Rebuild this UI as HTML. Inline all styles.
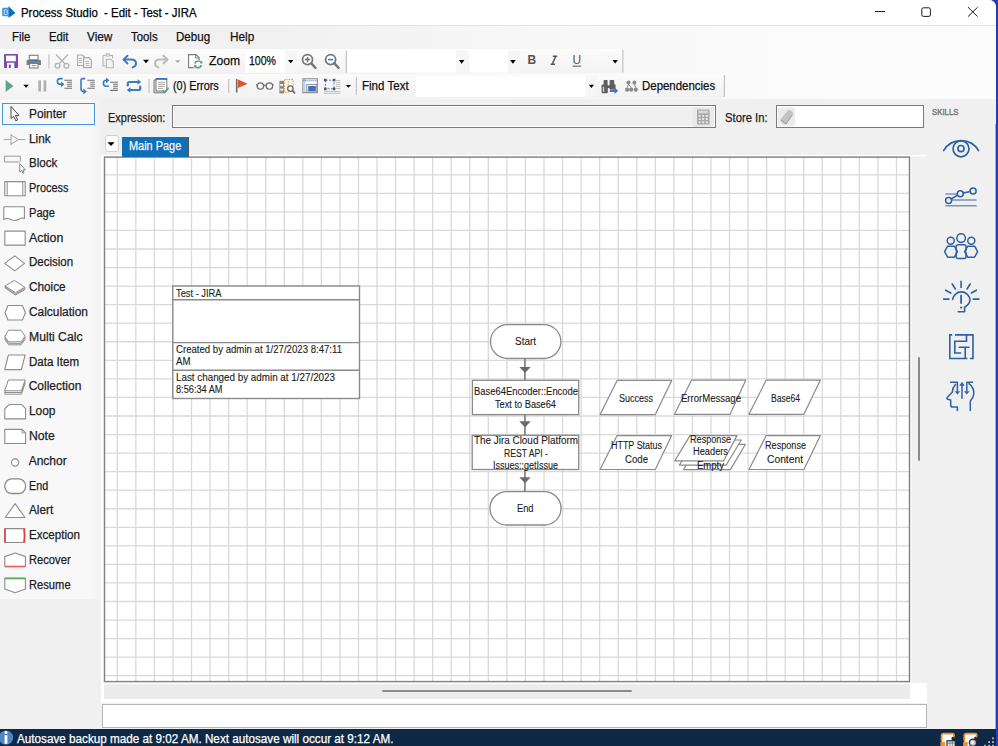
<!DOCTYPE html>
<html><head><meta charset="utf-8">
<style>
*{margin:0;padding:0;box-sizing:border-box}
html,body{width:998px;height:746px;overflow:hidden;background:#1f40b4}
body{font-family:"Liberation Sans",sans-serif;color:#1a1a1a;position:relative}
.a{position:absolute}
.t{position:absolute;white-space:pre;line-height:1;-webkit-text-stroke:0.25px currentColor}
svg{overflow:visible}
</style></head><body>
<div class="a" style="left:0;top:0;width:996px;height:746px;background:#f0f0f0;border-top-right-radius:7px;overflow:hidden">
<div class="a" style="left:0;top:0;width:996px;height:25px;background:#fff"></div>
<div class="a" style="left:0;top:25px;width:996px;height:1px;background:#e4e4e4"></div>
<div class="a" style="left:0;top:26px;width:996px;height:73px;background:linear-gradient(90deg,#f0f0f0 0,#f1f1f1 280px,#f7f7f7 520px,#fafafa 760px,#fcfcfc 996px)"></div>
<div class="a" style="left:0;top:49px;width:623px;height:24px;background:linear-gradient(#fcfcfc,#f2f2f2)"></div>
<div class="a" style="left:0;top:74px;width:724px;height:24px;background:linear-gradient(#fbfbfb,#f2f2f2)"></div>
<div class="a" style="left:0;top:99px;width:101px;height:500px;background:linear-gradient(90deg,#f8f8f8 90px,#f2f2f2 101px)"></div>
<svg class="a" style="left:0;top:0" width="998" height="746" viewBox="0 0 998 746"><rect x="101" y="155" width="826" height="548" fill="#fff"/><rect x="911.5" y="156.5" width="15.5" height="526.5" fill="#f0f0f0"/><rect x="104.5" y="157.1" width="805.0" height="524.5" fill="#fff"/><path d="M117.30 157.1V681.6M135.85 157.1V681.6M154.40 157.1V681.6M172.96 157.1V681.6M191.51 157.1V681.6M210.06 157.1V681.6M228.61 157.1V681.6M247.16 157.1V681.6M265.72 157.1V681.6M284.27 157.1V681.6M302.82 157.1V681.6M321.37 157.1V681.6M339.92 157.1V681.6M358.48 157.1V681.6M377.03 157.1V681.6M395.58 157.1V681.6M414.13 157.1V681.6M432.68 157.1V681.6M451.24 157.1V681.6M469.79 157.1V681.6M488.34 157.1V681.6M506.89 157.1V681.6M525.44 157.1V681.6M544.00 157.1V681.6M562.55 157.1V681.6M581.10 157.1V681.6M599.65 157.1V681.6M618.20 157.1V681.6M636.76 157.1V681.6M655.31 157.1V681.6M673.86 157.1V681.6M692.41 157.1V681.6M710.96 157.1V681.6M729.52 157.1V681.6M748.07 157.1V681.6M766.62 157.1V681.6M785.17 157.1V681.6M803.72 157.1V681.6M822.28 157.1V681.6M840.83 157.1V681.6M859.38 157.1V681.6M877.93 157.1V681.6M896.48 157.1V681.6M104.5 174.80H909.5M104.5 193.35H909.5M104.5 211.90H909.5M104.5 230.46H909.5M104.5 249.01H909.5M104.5 267.56H909.5M104.5 286.11H909.5M104.5 304.66H909.5M104.5 323.22H909.5M104.5 341.77H909.5M104.5 360.32H909.5M104.5 378.87H909.5M104.5 397.42H909.5M104.5 415.98H909.5M104.5 434.53H909.5M104.5 453.08H909.5M104.5 471.63H909.5M104.5 490.18H909.5M104.5 508.74H909.5M104.5 527.29H909.5M104.5 545.84H909.5M104.5 564.39H909.5M104.5 582.94H909.5M104.5 601.50H909.5M104.5 620.05H909.5M104.5 638.60H909.5M104.5 657.15H909.5M104.5 675.70H909.5" stroke="#d9d9d9" stroke-width="1.3" fill="none"/><rect x="104.5" y="157.1" width="805.0" height="524.5" fill="none" stroke="#858585" stroke-width="1.5"/></svg>
<svg class="a" style="left:0;top:0" width="30" height="25" viewBox="0 0 30 25"><path d="M8.4 6.9Q8.6 6.4 9.2 6.8L14.8 12.6Q15.2 13.1 14.8 13.6L9.2 17.4Q8.6 17.8 8.4 17.2Z" fill="#0b6fc0"/><rect x="2.2" y="7.8" width="6.6" height="8.4" rx="1.2" fill="#3d92d8"/><path d="M4.3 9.9H6.4Q7.6 9.9 7.6 11.1Q7.6 12.1 6.6 12.2Q7.8 12.3 7.8 13.4Q7.8 14.6 6.5 14.6H4.3Z" fill="none" stroke="#d5e9f8" stroke-width="0.9"/></svg>
<div class="t" style="left:21.00px;top:7.00px;font-size:12.5px;color:#000;transform:scaleX(0.9131);transform-origin:0 0;">Process Studio  - Edit - Test - JIRA</div>
<svg class="a" style="left:860px;top:0" width="136" height="25" viewBox="0 0 136 25"><path d="M15 11.5H25" stroke="#1a1a1a" stroke-width="1"/><rect x="61.8" y="7.8" width="8.6" height="8.6" rx="1.6" fill="none" stroke="#1a1a1a" stroke-width="1"/><path d="M108 7.2L117.6 16.6M117.6 7.2L108 16.6" stroke="#1a1a1a" stroke-width="1"/></svg>
<svg class="a" style="left:0;top:0" width="998" height="100" viewBox="0 0 998 100"><rect x="245.5" y="50.8" width="39.7" height="22" fill="#fff"/><rect x="285.2" y="50.8" width="11.8" height="22" fill="#f6f6f6"/><rect x="347" y="50.5" width="109" height="22" fill="#fff"/><rect x="456" y="50.5" width="11.6" height="22" fill="#f6f6f6"/><rect x="469.5" y="50.5" width="38.5" height="22" fill="#fff"/><rect x="508" y="50.5" width="11.6" height="22" fill="#f6f6f6"/><rect x="415.7" y="76.4" width="170" height="20.5" fill="#fff"/><rect x="585.6" y="76.4" width="12.1" height="20.5" fill="#f6f6f6"/><rect x="48.3" y="54.5" width="1.2" height="13.900000000000006" fill="#c4c4c4"/><rect x="345.79999999999995" y="50.5" width="1.2" height="22.0" fill="#c4c4c4"/><rect x="622.3" y="50" width="1.2" height="22.5" fill="#c4c4c4"/><rect x="148.4" y="79" width="1.2" height="14" fill="#c4c4c4"/><rect x="228.1" y="79" width="1.2" height="14" fill="#c4c4c4"/><rect x="355.79999999999995" y="77" width="1.2" height="18" fill="#c4c4c4"/><rect x="723.8" y="75" width="1.2" height="22" fill="#c4c4c4"/><rect x="4" y="54.1" width="14" height="13.9" rx="0.8" fill="#7b4bb0"/><rect x="6" y="55.6" width="9.8" height="5.7" fill="#fff"/><rect x="7.1" y="62.8" width="7.2" height="5.2" fill="#fff"/><rect x="8.8" y="64.6" width="2" height="3.4" fill="#7b4bb0"/><rect x="29.3" y="55.3" width="8.7" height="5" fill="#fff" stroke="#7e7e7e" stroke-width="1.1"/><path d="M26.6 65V61.2Q26.6 59.8 28 59.8H39.6Q41 59.8 41 61.2V65Z" fill="#7e7e7e"/><rect x="29.5" y="59.6" width="8.5" height="1.3" fill="#2f6fc0"/><rect x="29.6" y="63.5" width="8.4" height="4.5" fill="#fff" stroke="#7e7e7e" stroke-width="1.1"/><rect x="31.8" y="65.2" width="4" height="1" fill="#4a8ad0"/><g fill="none" stroke="#b4b4b4" stroke-width="1.3"><path d="M56 54.5L65 64M68 54.5L59 64"/><circle cx="57.6" cy="65.8" r="2.4"/><circle cx="66.4" cy="65.8" r="2.4"/></g><g fill="#f4f4f4" stroke="#ababab" stroke-width="1.1"><path d="M77.6 55H82.5L84.5 57V65.5H77.6Z"/><path d="M83.6 57.6H89L91.4 60V67.6H83.6Z"/><path d="M85.5 61.5H89M85.5 63.5H89.5M85.5 65.5H89.5M79 58.5H82M79 60.5H82M79 62.5H82" stroke-width="0.8"/></g><g fill="#f4f4f4" stroke="#b4b4b4" stroke-width="1.1"><path d="M103 55.5H105.5M110 55.5H112.6V58.5M103 55.5V66H105.8"/><path d="M106.2 54.2Q108 52.8 109.6 54.2V56H106.2Z"/><path d="M106.3 59.3H111L113.3 61.6V67.8H106.3Z"/></g><g fill="none" stroke="#3b7bc4" stroke-width="2" stroke-linecap="round" stroke-linejoin="round"><path d="M127.5 55.8L123.5 59.6L127.5 63.4"/><path d="M124 59.6H131Q136 59.6 136 63.6Q136 66.5 132.6 67.4"/></g><path d="M143 59.8H149L146.0 63.2Z" fill="#000"/><g fill="none" stroke="#bbbbbb" stroke-width="2" stroke-linecap="round" stroke-linejoin="round"><path d="M163.4 55.8L167.5 59.6L163.4 63.4"/><path d="M167 59.6H160Q155 59.6 155 63.6Q155 66.5 158.4 67.4"/></g><path d="M175 60.3H180.6L177.8 63Z" fill="#a8a8a8"/><path d="M188.6 54.6H196L199.2 57.8V67.6H188.6Z" fill="#fff" stroke="#7c7c7c" stroke-width="1.1"/><path d="M195.6 54.6V58H199" fill="none" stroke="#7c7c7c" stroke-width="1"/><rect x="193.6" y="60.2" width="8.8" height="8.2" fill="#fff"/><g fill="none" stroke="#5aa58a" stroke-width="1.6"><path d="M195 63.6Q195.6 61 198.3 61Q200.6 61 201.6 62.6"/><path d="M201.4 65Q200.8 67.6 198 67.6Q195.8 67.6 194.8 66"/></g><path d="M202.4 60.6V63.6H199.4Z" fill="#5aa58a"/><path d="M194 68V65H197Z" fill="#5aa58a"/><circle cx="307.5" cy="59.6" r="5" fill="#fff" stroke="#777" stroke-width="1.8"/><path d="M311.1 63.2L315.5 67.8" stroke="#777" stroke-width="2.4" stroke-linecap="round"/><path d="M304.9 59.6H310.1M307.5 57V62.2" stroke="#3b7bc4" stroke-width="1.5"/><circle cx="330.6" cy="59.6" r="5" fill="#fff" stroke="#777" stroke-width="1.8"/><path d="M334.20000000000005 63.2L338.6 67.8" stroke="#777" stroke-width="2.4" stroke-linecap="round"/><path d="M328.0 59.6H333.20000000000005" stroke="#3b7bc4" stroke-width="1.5"/><path d="M288 60.1H293.5L290.75 63.2Z" fill="#000"/><path d="M459 59.9H464.4L461.7 63.7Z" fill="#000"/><path d="M510 59.9H515.8L512.9 63.7Z" fill="#000"/><path d="M612.4 59.9H618L615.2 63.5Z" fill="#000"/><text x="527.5" y="64.2" font-family="Liberation Sans" font-weight="bold" font-size="12" fill="#555">B</text><path d="M552.8 56.2H557.2M550.6 64.2H555M555.8 56.2L552.2 64.2" stroke="#555" stroke-width="1.5" fill="none"/><text x="572.6" y="64" font-family="Liberation Sans" font-size="12" fill="#555">U</text><rect x="572.6" y="65.6" width="8.6" height="1" fill="#555"/><path d="M5.6 79.9L13.5 85.9L5.6 91.9Z" fill="#5fa58e"/><path d="M23.3 84.8H28.9L26.1 87.8Z" fill="#000"/><rect x="38.3" y="80.3" width="2.7" height="11.2" fill="#b0b0b0"/><rect x="43.6" y="80.3" width="2.7" height="11.2" fill="#b0b0b0"/><g fill="none" stroke="#3b7bc4" stroke-width="1.6"><path d="M62.8 78.6H60Q57.4 78.6 57.4 81.4Q57.4 84.3 60.4 84.3H61.6"/></g><path d="M61 81.4L64.4 84.3L61 87.2Z" fill="#3b7bc4"/><path d="M64.3 80.3H72M67.2 82.3H72M67.2 84.3H72M67.2 86.3H72M64.3 88.3H72" stroke="#707070" stroke-width="1.1"/><g fill="none" stroke="#3b7bc4" stroke-width="1.6"><path d="M85.2 78.6H83Q81 78.6 81 80.6V88.6Q81 91.6 83.6 91.6H84"/></g><path d="M83.4 88.6L86.8 91.6L83.4 94.6Z" fill="#3b7bc4"/><path d="M87.4 80.3H94.8M90.30000000000001 82.3H94.8M90.30000000000001 84.3H94.8M90.30000000000001 86.3H94.8M87.4 88.3H94.8" stroke="#707070" stroke-width="1.1"/><g fill="none" stroke="#3b7bc4" stroke-width="1.6"><path d="M108.9 86.2H106Q103.4 86.2 103.4 83.3Q103.4 80.3 106.2 80.3H106.6"/></g><path d="M106 77.4L109.4 80.3L106 83.2Z" fill="#3b7bc4"/><path d="M110.2 82.3H117.8M113.10000000000001 84.3H117.8M113.10000000000001 86.3H117.8M113.10000000000001 88.3H117.8M110.2 90.4H117.8" stroke="#707070" stroke-width="1.1"/><g fill="none" stroke="#3b7bc4" stroke-width="2.2" stroke-linecap="round" stroke-linejoin="round"><path d="M127.8 85.4V83.6Q127.8 82 129.4 82H138.2"/><path d="M140.2 86.6V88.4Q140.2 90 138.6 90H129.8"/></g><path d="M137.6 79.2L141.2 82L137.6 84.8Z" fill="#3b7bc4"/><path d="M130.4 87.2L126.8 90L130.4 92.8Z" fill="#3b7bc4"/><path d="M154 80H164.6V92.8H154Z" fill="#ddd" stroke="#7a7a7a" stroke-width="1"/><path d="M156 78.6H166.8V91H156Z" fill="#fff" stroke="#7a7a7a" stroke-width="1"/><rect x="155.6" y="78.2" width="11.6" height="1.6" fill="#2f6fc0"/><path d="M158 82.4H165M158 84.4H165M158 86.4H165M158 88.4H163" stroke="#9a9a9a" stroke-width="0.9"/><path d="M162.6 90L164.8 92.4L168.6 87.6" fill="none" stroke="#5aa58a" stroke-width="1.7"/><rect x="235.9" y="79.1" width="1.6" height="13.4" fill="#6a6a6a"/><path d="M238 79.6L247.6 83.8L238 88Z" fill="#e0532e"/><g fill="none" stroke="#6e6e6e" stroke-width="1.3"><circle cx="260.4" cy="86" r="3.2"/><circle cx="269.4" cy="86" r="3.2"/><path d="M263.6 85.6Q265 84.6 266.2 85.6M257.2 85.6L256.6 84M272.6 85.6L273.2 84"/></g><g><rect x="279.4" y="80.8" width="4.6" height="12.6" fill="#888"/><rect x="280.2" y="84" width="3" height="2" fill="#eee"/><rect x="280.2" y="88.6" width="3" height="2" fill="#eee"/><path d="M284.6 79.6H288.2V92.6H284.6Z" fill="none" stroke="#e0a040" stroke-width="1" stroke-dasharray="1.6 1"/><path d="M288.8 79.4H293V86" fill="none" stroke="#e0a040" stroke-width="1" stroke-dasharray="1.6 1"/><circle cx="290.4" cy="88.6" r="2.7" fill="#fff" stroke="#666" stroke-width="1.3"/><path d="M292.4 90.6L295 93.4" stroke="#666" stroke-width="1.6"/></g><rect x="302.9" y="78.8" width="14.4" height="13.9" fill="#fff" stroke="#808080" stroke-width="1"/><path d="M303.4 80.6H316.8M304.8 79.4V92.2" stroke="#5a8fd0" stroke-width="1.2" stroke-dasharray="1 1"/><rect x="306.8" y="84.6" width="10" height="7.6" fill="#fff" stroke="#808080" stroke-width="0.9"/><rect x="308.2" y="86" width="7.6" height="5.4" fill="#3b6fb8"/><path d="M336 80.5H340.4M336 82.5H340.4M336 84.5H340.4M336 86.5H340.4M336 88.5H340.4M324 91.5H340.4M324 93.4H340.4" stroke="#a8a8a8" stroke-width="0.7"/><rect x="325.4" y="80.2" width="8.6" height="8.6" fill="none" stroke="#4a86cc" stroke-width="1" stroke-dasharray="2.2 1.4"/><g fill="#555"><rect x="324" y="78.8" width="2.6" height="2.6"/><rect x="332.8" y="78.8" width="2.6" height="2.6"/><rect x="324" y="87.6" width="2.6" height="2.6"/><rect x="332.8" y="87.6" width="2.6" height="2.6"/></g><path d="M345.9 84.9H350.9L348.4 87.7Z" fill="#000"/><path d="M588.8 84.8H594L591.4 88Z" fill="#000"/><g fill="#5e5e5e"><rect x="601.6" y="84.6" width="6.2" height="8.6" rx="1"/><rect x="603.6" y="80" width="4" height="5.4" rx="0.8"/><rect x="609.6" y="80" width="4.6" height="5" rx="0.8"/><rect x="609.4" y="84.2" width="6.2" height="5.4" rx="1"/><rect x="606" y="85.4" width="4.2" height="2.6"/></g><rect x="602.8" y="86.8" width="1.4" height="5" fill="#cfcfcf"/><path d="M609.8 90.8H615.2" stroke="#3b7bc4" stroke-width="2.4"/><path d="M614.6 87.6L618.2 90.8L614.6 94Z" fill="#3b7bc4"/><g fill="#8a8a8a"><ellipse cx="628.5" cy="82.6" rx="1.9" ry="2.2"/><ellipse cx="634.4" cy="82.6" rx="1.9" ry="2.2"/><ellipse cx="627.1" cy="89.6" rx="2.1" ry="2.2"/><ellipse cx="631.2" cy="89.6" rx="2.1" ry="2.2"/><ellipse cx="635.8" cy="89.6" rx="2.1" ry="2.2"/></g><path d="M628.5 84.4L627.1 87.6M628.5 84.4L631.2 87.6M634.4 84.4L635.8 87.6" stroke="#8a8a8a" stroke-width="1"/></svg>
<div class="t" style="left:209.00px;top:55.00px;font-size:12.5px;color:#111;transform:scaleX(0.9702);transform-origin:0 0;">Zoom</div>
<div class="t" style="left:249.40px;top:55.00px;font-size:12.5px;color:#111;transform:scaleX(0.8445);transform-origin:0 0;">100%</div>
<div class="t" style="left:172.90px;top:80.00px;font-size:12.5px;color:#111;transform:scaleX(0.8677);transform-origin:0 0;">(0) Errors</div>
<div class="t" style="left:361.70px;top:80.00px;font-size:12.5px;color:#111;transform:scaleX(0.9230);transform-origin:0 0;">Find Text</div>
<div class="t" style="left:642.40px;top:80.00px;font-size:12.5px;color:#111;transform:scaleX(0.9159);transform-origin:0 0;">Dependencies</div>
<div class="a" style="left:2px;top:103px;width:92.5px;height:21.5px;border:1.5px solid #4595e6;background:#f7f7f7"></div>
<div class="t" style="left:28.70px;top:108.00px;font-size:12px;color:#1e1e1e;transform:scaleX(0.9862);transform-origin:0 0;">Pointer</div>
<div class="t" style="left:28.70px;top:133.00px;font-size:12px;color:#1e1e1e;transform:scaleX(0.9812);transform-origin:0 0;">Link</div>
<div class="t" style="left:28.70px;top:157.00px;font-size:12px;color:#1e1e1e;transform:scaleX(0.9678);transform-origin:0 0;">Block</div>
<div class="t" style="left:28.70px;top:182.00px;font-size:12px;color:#1e1e1e;transform:scaleX(0.9089);transform-origin:0 0;">Process</div>
<div class="t" style="left:28.70px;top:207.00px;font-size:12px;color:#1e1e1e;transform:scaleX(0.9241);transform-origin:0 0;">Page</div>
<div class="t" style="left:28.70px;top:232.00px;font-size:12px;color:#1e1e1e;transform:scaleX(1.0284);transform-origin:0 0;">Action</div>
<div class="t" style="left:28.70px;top:256.00px;font-size:12px;color:#1e1e1e;transform:scaleX(0.9583);transform-origin:0 0;">Decision</div>
<div class="t" style="left:28.70px;top:281.00px;font-size:12px;color:#1e1e1e;transform:scaleX(0.9798);transform-origin:0 0;">Choice</div>
<div class="t" style="left:28.70px;top:306.00px;font-size:12px;color:#1e1e1e;transform:scaleX(0.9921);transform-origin:0 0;">Calculation</div>
<div class="t" style="left:28.70px;top:331.00px;font-size:12px;color:#1e1e1e;transform:scaleX(1.0156);transform-origin:0 0;">Multi Calc</div>
<div class="t" style="left:28.70px;top:356.00px;font-size:12px;color:#1e1e1e;transform:scaleX(0.9612);transform-origin:0 0;">Data Item</div>
<div class="t" style="left:28.70px;top:380.00px;font-size:12px;color:#1e1e1e;">Collection</div>
<div class="t" style="left:28.70px;top:405.00px;font-size:12px;color:#1e1e1e;transform:scaleX(0.9926);transform-origin:0 0;">Loop</div>
<div class="t" style="left:28.70px;top:430.00px;font-size:12px;color:#1e1e1e;transform:scaleX(1.0178);transform-origin:0 0;">Note</div>
<div class="t" style="left:28.70px;top:455.00px;font-size:12px;color:#1e1e1e;">Anchor</div>
<div class="t" style="left:28.70px;top:480.00px;font-size:12px;color:#1e1e1e;transform:scaleX(0.8945);transform-origin:0 0;">End</div>
<div class="t" style="left:28.70px;top:504.00px;font-size:12px;color:#1e1e1e;transform:scaleX(0.9807);transform-origin:0 0;">Alert</div>
<div class="t" style="left:28.70px;top:529.00px;font-size:12px;color:#1e1e1e;transform:scaleX(0.9677);transform-origin:0 0;">Exception</div>
<div class="t" style="left:28.70px;top:554.00px;font-size:12px;color:#1e1e1e;transform:scaleX(0.9310);transform-origin:0 0;">Recover</div>
<div class="t" style="left:28.70px;top:579.00px;font-size:12px;color:#1e1e1e;transform:scaleX(0.9310);transform-origin:0 0;">Resume</div>
<svg class="a" style="left:0;top:0" width="100" height="600" viewBox="0 0 100 600"><path d="M11 106.4V118.6L13.6 116.2L15.8 120.8L17.6 120L15.4 115.4H19Z" fill="#fafafa" stroke="#3a3a3a" stroke-width="0.9" stroke-linejoin="round"/><g fill="none" stroke="#a4a4a4" stroke-width="1"><path d="M3.6 139.57999999999998H11M18.6 139.57999999999998H25.4"/><path d="M11 133.98V145.17999999999998M11 134.98L18.6 139.57999999999998L11 144.17999999999998"/></g><path d="M20.4 161.36V156.16000000000003H4.6V161.96H19.6" fill="none" stroke="#9a9a9a" stroke-width="1"/><path d="M19.8 163.56V172.16000000000003L21.6 170.36L23 173.16000000000003L24 172.76000000000002L22.8 169.96H25.4Z" fill="#fff" stroke="#777" stroke-width="0.9" stroke-linejoin="round"/><path d="M4.8 181.64H25.2V195.73999999999998H4.8Z" fill="#fff" stroke="#8c8c8c" stroke-width="1.1" stroke-linejoin="round"/><path d="M7.2 181.64V195.73999999999998M22.8 181.64V195.73999999999998" stroke="#8c8c8c" stroke-width="1"/><path d="M3.8 206.72000000000003H24.4V218.52Q22 217.12 19 219.32000000000002Q15 221.52 11 219.52Q7 217.52 3.8 219.52Z" fill="#fff" stroke="#8c8c8c" stroke-width="1.1" stroke-linejoin="round"/><path d="M4.8 231.1H25.2V245.1H4.8Z" fill="#fff" stroke="#8c8c8c" stroke-width="1.1" stroke-linejoin="round"/><path d="M14.7 255.88000000000002L24.6 263.38L14.7 270.88L4.8 263.38Z" fill="#fff" stroke="#8c8c8c" stroke-width="1.1" stroke-linejoin="round"/><g fill="#fff" stroke="#8c8c8c" stroke-width="1" stroke-linejoin="round"><path d="M5 285.96V287.85999999999996L15.4 295.06L24.8 289.65999999999997V287.26" fill="#ddd"/><path d="M5 286.96L15.4 293.85999999999996L24.8 288.46" fill="none" stroke-width="0.8"/><path d="M14.4 280.46L24.8 287.26L15.4 292.65999999999997L5 285.96Z"/></g><path d="M8 305.44H22.4L25.4 312.74L22.4 320.04H8L5 312.74Z" fill="#fff" stroke="#8c8c8c" stroke-width="1.1" stroke-linejoin="round"/><g fill="#fff" stroke="#8c8c8c" stroke-width="1" stroke-linejoin="round"><path d="M8.6 333.21999999999997H21L25.2 339.21999999999997L21 344.82H8.6L4.8 339.21999999999997Z"/><path d="M8.6 331.71999999999997H21L25.2 337.71999999999997L21 343.32H8.6L4.8 337.71999999999997Z"/><path d="M8.6 330.21999999999997H21L25.2 336.21999999999997L21 341.82H8.6L4.8 336.21999999999997Z"/></g><path d="M8.4 355.0H25.1L21.4 369.6H4.7Z" fill="#fff" stroke="#8c8c8c" stroke-width="1.1" stroke-linejoin="round"/><g fill="#fff" stroke="#8c8c8c" stroke-width="1" stroke-linejoin="round"><path d="M8.4 383.38000000000005H25.1L21.4 394.18000000000006H4.7Z"/><path d="M8.4 381.68000000000006H25.1L21.4 392.4800000000001H4.7Z"/><path d="M8.4 379.9800000000001H25.1L21.4 390.7800000000001H4.7Z"/></g><path d="M9 404.56H21.6L25.6 408.56V418.86H4.8V408.56Z" fill="#fff" stroke="#8c8c8c" stroke-width="1.1" stroke-linejoin="round"/><path d="M4.8 429.34H22L25.6 432.94V443.53999999999996H4.8Z" fill="#fff" stroke="#8c8c8c" stroke-width="1.1" stroke-linejoin="round"/><path d="M22 429.34V432.94H25.6" fill="none" stroke="#8c8c8c" stroke-width="0.9"/><circle cx="15.1" cy="462.52000000000004" r="3.6" fill="#fff" stroke="#8c8c8c" stroke-width="1.1"/><rect x="4.8" y="478.90000000000003" width="20.8" height="14.6" rx="7" fill="#fff" stroke="#8c8c8c" stroke-width="1.3"/><path d="M15.1 503.67999999999995L25 517.4799999999999H5.2Z" fill="#fff" stroke="#8c8c8c" stroke-width="1.1" stroke-linejoin="round"/><path d="M4.8 528.66H23.6L25 535.66L23.6 542.4599999999999H4.8Z" fill="#fff" stroke="#8c8c8c" stroke-width="1.1" stroke-linejoin="round"/><path d="M5 528.66V542.4599999999999M24.4 528.26V542.86" stroke="#e83a3a" stroke-width="1.6"/><path d="M15.1 553.0400000000001L25.4 556.6400000000001V566.2400000000001H4.8V556.6400000000001Z" fill="#fff" stroke="#8c8c8c" stroke-width="1.1" stroke-linejoin="round"/><path d="M4.8 566.6400000000001H25.4" stroke="#e86060" stroke-width="1.4"/><path d="M4.8 578.42H25.4V589.02L15.1 592.8199999999999L4.8 589.02Z" fill="#fff" stroke="#8c8c8c" stroke-width="1.1" stroke-linejoin="round"/><path d="M4.8 578.42H25.4" stroke="#5ab05a" stroke-width="1.8"/></svg>
<div class="t" style="left:107.50px;top:112.00px;font-size:12px;color:#1e1e1e;transform:scaleX(0.9155);transform-origin:0 0;">Expression:</div>
<div class="a" style="left:171.7px;top:105.2px;width:544.7px;height:23px;border:1px solid #7a7a7a;background:#f0f0f0;box-shadow:inset 0 0 0 1px #fff"></div>
<svg class="a" style="left:690px;top:106px" width="26" height="22" viewBox="690 106 26 22"><rect x="692.5" y="107" width="21.5" height="20" rx="2" fill="#eaeaea"/><rect x="697" y="109.4" width="12.6" height="15" rx="0.6" fill="#a8a8a8"/><rect x="698.4" y="110.6" width="9.8" height="2.8" fill="#d8d8d8"/><g fill="#eee"><rect x="698.6" y="115" width="2" height="1.8"/><rect x="702.2" y="115" width="2" height="1.8"/><rect x="705.8" y="115" width="2" height="1.8"/><rect x="698.6" y="118.2" width="2" height="1.8"/><rect x="702.2" y="118.2" width="2" height="1.8"/><rect x="705.8" y="118.2" width="2" height="1.8"/><rect x="698.6" y="121.4" width="2" height="1.8"/><rect x="702.2" y="121.4" width="2" height="1.8"/><rect x="705.8" y="121.4" width="2" height="1.8"/></g></svg>
<div class="t" style="left:724.70px;top:112.00px;font-size:12px;color:#1e1e1e;transform:scaleX(0.9392);transform-origin:0 0;">Store In:</div>
<div class="a" style="left:775.5px;top:105.2px;width:148px;height:23px;border:1px solid #7a7a7a;background:#fff"></div>
<svg class="a" style="left:776px;top:106px" width="24" height="22" viewBox="776 106 24 22"><rect x="778" y="107.4" width="17" height="18.6" rx="2" fill="#ececec"/><path d="M780.6 119.6L787.6 110.6Q789 109.2 790.6 110.4L792.4 111.8Q793.6 113 792.6 114.4L786 123.4Q785 124.6 783.4 123.6L781.4 122Q780 121 780.6 119.6Z" fill="#c2c2c2"/><path d="M781 120L786 124L792.6 114.6" fill="none" stroke="#9a9a9a" stroke-width="1"/></svg>
<div class="t" style="left:931.80px;top:107.00px;font-size:9.6px;color:#7d746c;transform:scaleX(0.8140);transform-origin:0 0;-webkit-text-stroke:0.4px currentColor;">SKILLS</div>
<div class="a" style="left:104.6px;top:135.2px;width:14.4px;height:17.3px;border:1px solid #d0d0d0;border-radius:3px;background:#fff"></div>
<svg class="a" style="left:104px;top:135px" width="16" height="18" viewBox="104 135 16 18"><path d="M107.4 142.2H114.6L111 146Z" fill="#000"/></svg>
<div class="a" style="left:121.8px;top:136.8px;width:65.9px;height:20.5px;background:#0f6fb9;box-shadow:1px 0 0 #555"></div>
<div class="t" style="left:129.00px;top:140.00px;font-size:12px;color:#f4f8fc;transform:scaleX(0.9099);transform-origin:0 0;">Main Page</div>
<div class="a" style="left:104px;top:684px;width:806px;height:15px;background:#ececec"></div>
<div class="a" style="left:381.7px;top:689.9px;width:250.5px;height:2.3px;background:#8c8c8c;border-radius:1px"></div>
<div class="a" style="left:917.6px;top:356.9px;width:2.6px;height:104.1px;background:#8a8a8a;border-radius:1px"></div>
<div class="a" style="left:102px;top:703.5px;width:824.7px;height:24.5px;border:1px solid #b4b4b4;background:#fff"></div>
<div class="t" style="left:11.70px;top:31.00px;font-size:12.5px;color:#111;transform:scaleX(0.9085);transform-origin:0 0;">File</div>
<div class="t" style="left:48.70px;top:31.00px;font-size:12.5px;color:#111;transform:scaleX(0.9053);transform-origin:0 0;">Edit</div>
<div class="t" style="left:86.70px;top:31.00px;font-size:12.5px;color:#111;transform:scaleX(0.9416);transform-origin:0 0;">View</div>
<div class="t" style="left:131.00px;top:31.00px;font-size:12.5px;color:#111;transform:scaleX(0.9115);transform-origin:0 0;">Tools</div>
<div class="t" style="left:176.30px;top:31.00px;font-size:12.5px;color:#111;transform:scaleX(0.9257);transform-origin:0 0;">Debug</div>
<div class="t" style="left:229.70px;top:31.00px;font-size:12.5px;color:#111;transform:scaleX(0.9413);transform-origin:0 0;">Help</div>
<svg class="a" style="left:0;top:0" width="998" height="746" viewBox="0 0 998 746"><g fill="#fff" stroke="#8a8a8a" stroke-width="1.4"><rect x="172.8" y="286" width="186.7" height="112.5"/></g><path d="M172.8 299.7H359.5M172.8 342.6H359.5M172.8 370.3H359.5" stroke="#8a8a8a" stroke-width="1.4"/><rect x="490.5" y="324.7" width="70.4" height="33.8" rx="16.9" fill="#fff" stroke="#8a8a8a" stroke-width="1.3"/><rect x="490" y="491.7" width="71" height="33.3" rx="16.6" fill="#fff" stroke="#8a8a8a" stroke-width="1.3"/><path d="M524.9 358.5V380.3M524.9 414.7V435.3M524.9 469.5V491.7" stroke="#707070" stroke-width="1.4"/><path d="M519.3 366.9H530.7L525 373.0Z" fill="#6a6a6a"/><path d="M519.3 421.3H530.7L525 427.40000000000003Z" fill="#6a6a6a"/><path d="M519.3 477.2H530.7L525 483.3Z" fill="#6a6a6a"/><rect x="472.4" y="380.3" width="106.3" height="34.3" fill="#fff" stroke="#8a8a8a" stroke-width="1.3"/><rect x="472.2" y="435.3" width="106.5" height="34.2" fill="#fff" stroke="#8a8a8a" stroke-width="1.3"/><path d="M617.1 380.4H671.7L655.3 414.6H600.1Z" fill="#fff" stroke="#8a8a8a" stroke-width="1.2" stroke-linejoin="round"/><path d="M691.6 380.1H745.8L730.1 414.3H674.5Z" fill="#fff" stroke="#8a8a8a" stroke-width="1.2" stroke-linejoin="round"/><path d="M766.2 380.1H820.4L803.9 414.3H749Z" fill="#fff" stroke="#8a8a8a" stroke-width="1.2" stroke-linejoin="round"/><path d="M617.1 435.6H671.7L655.3 469.5H600.1Z" fill="#fff" stroke="#8a8a8a" stroke-width="1.2" stroke-linejoin="round"/><path d="M766.2 435.6H820.4L803.9 469.5H749Z" fill="#fff" stroke="#8a8a8a" stroke-width="1.2" stroke-linejoin="round"/><path d="M698.8 444.3H745.4L730.4 469.6H683.6Z" fill="#fff" stroke="#8a8a8a" stroke-width="1.2" stroke-linejoin="round"/><path d="M694.5 440H741.3L726.1 465.2H679.3Z" fill="#fff" stroke="#8a8a8a" stroke-width="1.2" stroke-linejoin="round"/><path d="M690 435.6H737L723.7 460.8H674.8Z" fill="#fff" stroke="#8a8a8a" stroke-width="1.2" stroke-linejoin="round"/></svg>
<div class="t" style="left:175.80px;top:289.00px;font-size:10px;color:#1a1a1a;transform:scaleX(0.9305);transform-origin:0 0;-webkit-text-stroke:0.1px currentColor;">Test - JIRA</div>
<div class="t" style="left:175.80px;top:345.00px;font-size:10px;color:#1a1a1a;transform:scaleX(0.9611);transform-origin:0 0;-webkit-text-stroke:0.1px currentColor;">Created by admin at 1/27/2023 8:47:11</div>
<div class="t" style="left:175.80px;top:357.00px;font-size:10px;color:#1a1a1a;transform:scaleX(0.9666);transform-origin:0 0;-webkit-text-stroke:0.1px currentColor;">AM</div>
<div class="t" style="left:175.80px;top:373.00px;font-size:10px;color:#1a1a1a;transform:scaleX(0.9828);transform-origin:0 0;-webkit-text-stroke:0.1px currentColor;">Last changed by admin at 1/27/2023</div>
<div class="t" style="left:175.80px;top:385.00px;font-size:10px;color:#1a1a1a;transform:scaleX(0.9191);transform-origin:0 0;-webkit-text-stroke:0.1px currentColor;">8:56:34 AM</div>
<div class="t" style="left:514.80px;top:337.00px;font-size:10px;color:#1a1a1a;transform:scaleX(0.9944);transform-origin:0 0;-webkit-text-stroke:0.1px currentColor;">Start</div>
<div class="t" style="left:473.50px;top:387.00px;font-size:10px;color:#1a1a1a;transform:scaleX(0.9400);transform-origin:0 0;-webkit-text-stroke:0.1px currentColor;">Base64Encoder::Encode</div>
<div class="t" style="left:495.00px;top:400.00px;font-size:10px;color:#1a1a1a;transform:scaleX(0.9221);transform-origin:0 0;-webkit-text-stroke:0.1px currentColor;">Text to Base64</div>
<div class="t" style="left:473.50px;top:436.00px;font-size:10px;color:#1a1a1a;transform:scaleX(0.9901);transform-origin:0 0;-webkit-text-stroke:0.1px currentColor;">The Jira Cloud Platform</div>
<div class="t" style="left:503.50px;top:449.00px;font-size:10px;color:#1a1a1a;transform:scaleX(0.8637);transform-origin:0 0;-webkit-text-stroke:0.1px currentColor;">REST API -</div>
<div class="t" style="left:493.00px;top:461.00px;font-size:10px;color:#1a1a1a;transform:scaleX(0.8995);transform-origin:0 0;-webkit-text-stroke:0.1px currentColor;">Issues::getIssue</div>
<div class="t" style="left:517.25px;top:504.00px;font-size:10px;color:#1a1a1a;transform:scaleX(0.9273);transform-origin:0 0;-webkit-text-stroke:0.1px currentColor;">End</div>
<div class="t" style="left:618.60px;top:394.00px;font-size:10px;color:#1a1a1a;transform:scaleX(0.8996);transform-origin:0 0;-webkit-text-stroke:0.1px currentColor;">Success</div>
<div class="t" style="left:680.50px;top:394.00px;font-size:10px;color:#1a1a1a;transform:scaleX(0.9554);transform-origin:0 0;-webkit-text-stroke:0.1px currentColor;">ErrorMessage</div>
<div class="t" style="left:770.50px;top:394.00px;font-size:10px;color:#1a1a1a;transform:scaleX(0.8550);transform-origin:0 0;-webkit-text-stroke:0.1px currentColor;">Base64</div>
<div class="t" style="left:610.50px;top:441.00px;font-size:10px;color:#1a1a1a;transform:scaleX(0.8938);transform-origin:0 0;-webkit-text-stroke:0.1px currentColor;">HTTP Status</div>
<div class="t" style="left:624.50px;top:455.00px;font-size:10px;color:#1a1a1a;transform:scaleX(0.9621);transform-origin:0 0;-webkit-text-stroke:0.1px currentColor;">Code</div>
<div class="t" style="left:689.50px;top:435.00px;font-size:10px;color:#1a1a1a;transform:scaleX(0.9105);transform-origin:0 0;-webkit-text-stroke:0.1px currentColor;">Response</div>
<div class="t" style="left:692.50px;top:447.00px;font-size:10px;color:#1a1a1a;transform:scaleX(0.9259);transform-origin:0 0;-webkit-text-stroke:0.1px currentColor;">Headers</div>
<div class="t" style="left:696.50px;top:461.00px;font-size:10px;color:#1a1a1a;transform:scaleX(0.9527);transform-origin:0 0;-webkit-text-stroke:0.1px currentColor;">Empty</div>
<div class="t" style="left:764.50px;top:441.00px;font-size:10px;color:#1a1a1a;transform:scaleX(0.9105);transform-origin:0 0;-webkit-text-stroke:0.1px currentColor;">Response</div>
<div class="t" style="left:767.00px;top:455.00px;font-size:10px;color:#1a1a1a;transform:scaleX(1.0278);transform-origin:0 0;-webkit-text-stroke:0.1px currentColor;">Content</div>
<svg class="a" style="left:0;top:0" width="998" height="746" viewBox="0 0 998 746"><g fill="none" stroke="#2c62a4" stroke-width="1.7" stroke-linecap="round" stroke-linejoin="round"><path d="M943.6 150.6A20.4 20.4 0 0 1 978.6 150.6"/><circle cx="961" cy="148.8" r="8"/><circle cx="961" cy="148.6" r="3.1"/><path d="M945.4 194H957M952 199.9H976.6M945.4 205.8H976.6" stroke="#6f95c2" stroke-width="1.5" stroke-linecap="butt"/><circle cx="948.6" cy="200.4" r="3" stroke-width="1.5"/><circle cx="960.3" cy="193.8" r="3" stroke-width="1.5"/><circle cx="973.1" cy="190.9" r="3" stroke-width="1.5"/><path d="M951.2 199L957.6 195.2M963.2 193.1L970.2 191.6" stroke-width="1.5"/><g stroke-width="1.5"><circle cx="961.1" cy="238.1" r="4.3"/><circle cx="950.7" cy="240.8" r="3.5"/><circle cx="971.3" cy="240.8" r="3.5"/><path d="M947.6 246.2H954.4L957.4 251.7L954.4 257.2H947.6L944.6 251.7Z"/><path d="M967.7 246.2H974.6L977.6 251.7L974.6 257.2H967.7L964.7 251.7Z"/><path d="M958 244.8H964.2Q966 244.8 966 246.6V250.6L965 251.7L966 252.8V257Q966 258.6 964.2 258.6H958Q956.2 258.6 956.2 257V252.8L957.2 251.7L956.2 250.6V246.6Q956.2 244.8 958 244.8Z"/></g><g stroke-width="1.6"><path d="M961.1 281.4V287.4M952.2 284L955.4 289M970.2 284L967 289M945.6 290.2L950.8 293M976.4 290.2L971.4 293M943.6 299.1H949M973.2 299.1H979"/><path d="M952.6 299.4A8.8 8.8 0 0 1 970 299.4Q970 304 964.6 307.2V311.8H958.2"/><path d="M961.1 295.4V303" stroke-width="1.8"/></g><circle cx="961.1" cy="307.6" r="1.1" fill="#2c62a4" stroke="none"/><g stroke-width="1.6" stroke-linecap="square" stroke-linejoin="miter"><path d="M951.4 334.9H949.8V358.5H966.6"/><path d="M955.8 334.9H973V358.5H970.8"/><path d="M966.5 334.9V341.3H954.8V353H960.4"/><path d="M959.4 347.2H968.8M965.2 347.2V358.3"/></g><g stroke-width="1.5"><path d="M950.6 382.3H957.4V391"/><path d="M972.6 382.3H966.8V391"/><path d="M962 398.2V384.6"/><path d="M955.6 384.2Q952.6 387.4 952.2 392.2L947.2 397.6Q946.6 398.6 947.6 399.2L950.7 400V405.2Q950.7 407.1 952.8 407.1H957.4V410.6"/><path d="M969 383.6Q974.2 387.4 973.8 394Q973.4 398 970.3 401V410.6"/></g></g><path d="M954.6 391.2H960.2L957.4 394.4Z M964 391.2H969.6L966.8 394.4Z M959.2 385.8L962 381.8L964.8 385.8Z" fill="#2c62a4"/></svg>
<div class="a" style="left:995px;top:124px;width:1.2px;height:605px;background:#2ee0f0"></div>
<div class="a" style="left:0;top:729px;width:996px;height:17px;background:#0e2846"></div>
<svg class="a" style="left:0;top:729px" width="996" height="17" viewBox="0 729 996 17"><circle cx="6" cy="737.6" r="7.2" fill="#4f86c6"/><rect x="4.6" y="735.2" width="2.8" height="8.6" fill="#fff"/><circle cx="6" cy="732.6" r="1.5" fill="#fff"/><g><path d="M941.6 746V735.6Q941.6 733.6 943.6 733.6H952.6Q954.4 733.6 954.2 735.6L953.2 737H951.6V746Z" fill="#fff"/><path d="M941.6 741V735.4Q941.6 733.6 943.6 733.6H952.6Q954.6 733.6 953.8 736.4L953 737" fill="none" stroke="#f0902e" stroke-width="1.8"/><path d="M940.4 742H945V746H940.4Z" fill="#f0902e"/><rect x="946.4" y="740.2" width="9.4" height="6" fill="#1b2d44"/><rect x="947.6" y="741.4" width="7" height="4.6" fill="#e8e8e8"/><path d="M947.6 743.2H954.6M950 741.4V746M952.4 741.4V746" stroke="#555" stroke-width="0.6"/></g><g><path d="M964.3 746V735.6Q964.3 733.6 966.3 733.6H975.3Q977.1 733.6 976.9 735.6L975.9 737H974.3V746Z" fill="#fff"/><path d="M964.3 741V735.4Q964.3 733.6 966.3 733.6H975.3Q977.3 733.6 976.5 736.4L975.7 737" fill="none" stroke="#f0902e" stroke-width="1.8"/><path d="M963.1 742H967.7V746H963.1Z" fill="#f0902e"/><circle cx="972.9" cy="742.7" r="3.6" fill="#bdbdbd" stroke="#1b2d44" stroke-width="1.2"/><circle cx="972.6" cy="742.4" r="1.6" fill="#f4f4f4"/></g><g fill="#b8bec8"><rect x="992" y="737.4" width="1.8" height="1.8"/><rect x="988.2" y="741.2" width="1.8" height="1.8"/><rect x="992" y="741.2" width="1.8" height="1.8"/><rect x="984.2" y="744.8" width="1.8" height="1.8"/><rect x="988.2" y="744.8" width="1.8" height="1.8"/><rect x="992" y="744.8" width="1.8" height="1.8"/></g></svg>
<div class="t" style="left:17.00px;top:733.00px;font-size:12px;color:#fff;transform:scaleX(0.9748);transform-origin:0 0;">Autosave backup made at 9:02 AM. Next autosave will occur at 9:12 AM.</div>
</div>
</body></html>
